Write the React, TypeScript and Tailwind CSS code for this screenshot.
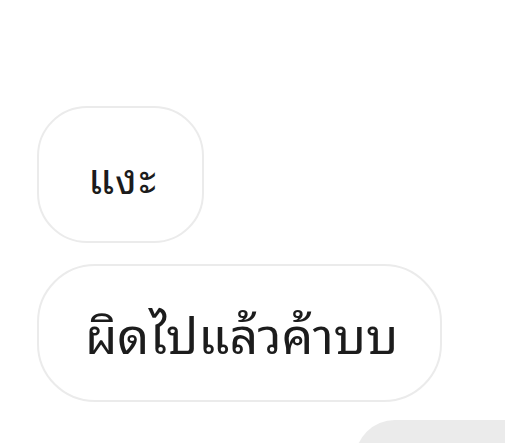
export default function App() {
  return (
    <div className="w-[505px] h-[443px] overflow-hidden bg-white flex flex-col pt-[106px] pl-[37px] font-['Noto_Sans_Thai_Looped',sans-serif] text-[#1c1c1c]">
      <div className="self-start shrink-0 h-[137px] w-[167px] rounded-[50px] border-2 border-[#ebebeb] flex items-center pl-[49px] text-[42px] font-normal tracking-[0.05em] leading-none">
        แงะ
      </div>
      <div className="self-start shrink-0 mt-[21px] h-[138px] w-[405px] rounded-[58px] border-2 border-[#ebebeb] flex items-center pl-[46px] pb-[3px] text-[50px] leading-none">
        ผิดไปแล้วค้าบบ
      </div>
      <div className="self-end shrink-0 mt-[18px] h-[80px] w-[150px] rounded-l-[50px] bg-[#ebebeb]" />
    </div>
  );
}
